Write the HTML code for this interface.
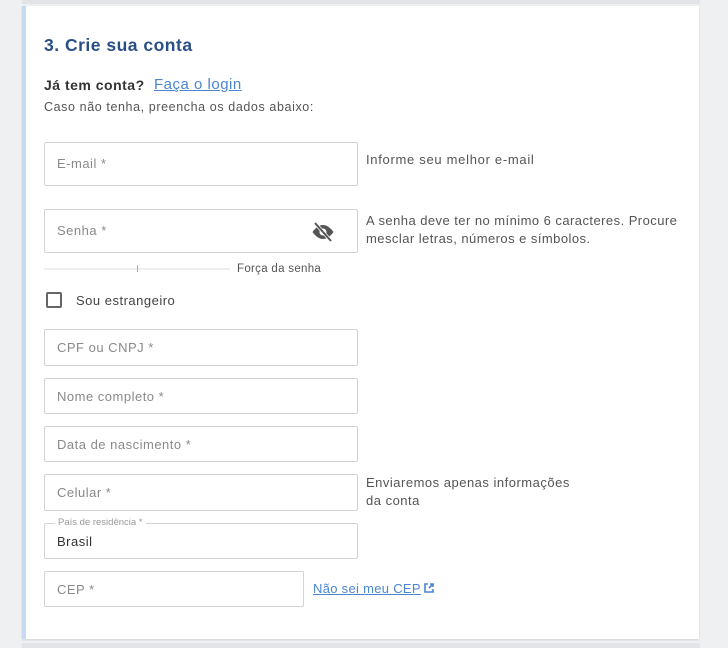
<!DOCTYPE html>
<html><head><meta charset="utf-8"><style>
body{margin:0;width:728px;height:648px;background:#eef0f2;font-family:"Liberation Sans",sans-serif;position:relative;overflow:hidden;letter-spacing:0.5px}
.topbar{position:absolute;left:22px;top:0;width:678px;height:4px;background:#e2e4e7}
.card{position:absolute;left:22px;top:6px;width:677px;height:633px;background:#fff;border-left:4px solid #c6daf0;box-sizing:border-box;box-shadow:0 1px 2px rgba(0,0,0,.12)}
.bot{position:absolute;left:22px;top:643px;width:678px;height:5px;background:#e2e4e7}
.a{position:absolute}
.f{position:absolute;left:44px;width:314px;border:1px solid #d3d3d3;border-radius:2px;box-sizing:border-box;background:#fff}
.ph{position:absolute;left:12px;font-size:13px;color:#8a8a8a}
.hint{position:absolute;left:366px;font-size:13px;color:#555;line-height:18px}
</style></head><body>
<div class="topbar"></div>
<div class="card"></div>
<div class="bot"></div>
<div class="a" style="left:44px;top:35px;font-size:17.5px;font-weight:bold;color:#2a4f86;letter-spacing:0.5px">3. Crie sua conta</div>
<div class="a" style="left:44px;top:77px;font-size:14px;font-weight:bold;color:#333">Já tem conta?</div>
<div class="a" style="left:154px;top:76px;font-size:15px;color:#4a86d0;text-decoration:underline">Faça o login</div>
<div class="a" style="left:44px;top:100px;font-size:12.5px;color:#555;letter-spacing:0.6px">Caso não tenha, preencha os dados abaixo:</div>

<div class="f" style="top:142px;height:44px"><span class="ph" style="top:13px">E-mail *</span></div>
<div class="hint" style="top:151px;letter-spacing:0.7px">Informe seu melhor e-mail</div>

<div class="f" style="top:209px;height:44px"><span class="ph" style="top:13px">Senha *</span>
<svg style="position:absolute;left:266px;top:10px" width="24" height="24" viewBox="0 0 24 24"><path d="M12 5C6 5 1.5 12 1.5 12s4.5 7 10.5 7 10.5-7 10.5-7S18 5 12 5z" fill="#555"/><circle cx="12" cy="12" r="3.5" fill="#fff"/><line x1="4" y1="3" x2="20" y2="21" stroke="#fff" stroke-width="3.5"/><line x1="4" y1="3" x2="20" y2="21" stroke="#555" stroke-width="2"/></svg></div>
<div class="hint" style="top:212px;letter-spacing:0.45px">A senha deve ter no mínimo 6 caracteres. Procure<br>mesclar letras, números e símbolos.</div>
<div class="a" style="left:44px;top:268px;width:186px;height:2px;background:#eee"></div>
<div class="a" style="left:137px;top:265px;width:1px;height:7px;background:#aaa"></div>
<div class="a" style="left:237px;top:263px;font-size:11.5px;color:#555;letter-spacing:0.3px">Força da senha</div>

<div class="a" style="left:46px;top:292px;width:16px;height:16px;border:2px solid #666;border-radius:2px;box-sizing:border-box"></div>
<div class="a" style="left:76px;top:293px;font-size:13px;color:#444">Sou estrangeiro</div>

<div class="f" style="top:329px;height:37px"><span class="ph" style="top:10px">CPF ou CNPJ *</span></div>
<div class="f" style="top:378px;height:36px"><span class="ph" style="top:10px">Nome completo *</span></div>
<div class="f" style="top:426px;height:36px"><span class="ph" style="top:10px">Data de nascimento *</span></div>
<div class="f" style="top:474px;height:37px"><span class="ph" style="top:10px">Celular *</span></div>
<div class="hint" style="top:474px">Enviaremos apenas informações<br>da conta</div>
<div class="f" style="top:523px;height:36px"><span class="ph" style="top:10px;color:#333">Brasil</span>
<span style="position:absolute;left:10px;top:-7px;background:#fff;padding:0 3px;font-size:9.5px;color:#999;letter-spacing:0">País de residência *</span></div>
<div class="f" style="top:571px;height:36px;width:260px"><span class="ph" style="top:10px">CEP *</span></div>
<div class="a" style="left:313px;top:581px;font-size:13px;color:#4a86d0;text-decoration:underline;letter-spacing:0.3px">Não sei meu CEP</div>
<svg class="a" style="left:424px;top:583px" width="10" height="10" viewBox="0 0 10 10"><path d="M4 1H1v8h8V6" fill="none" stroke="#4a86d0" stroke-width="1.6"/><path d="M5 5L9 1M6 1h3v3" fill="none" stroke="#4a86d0" stroke-width="1.6"/></svg>
</body></html>
